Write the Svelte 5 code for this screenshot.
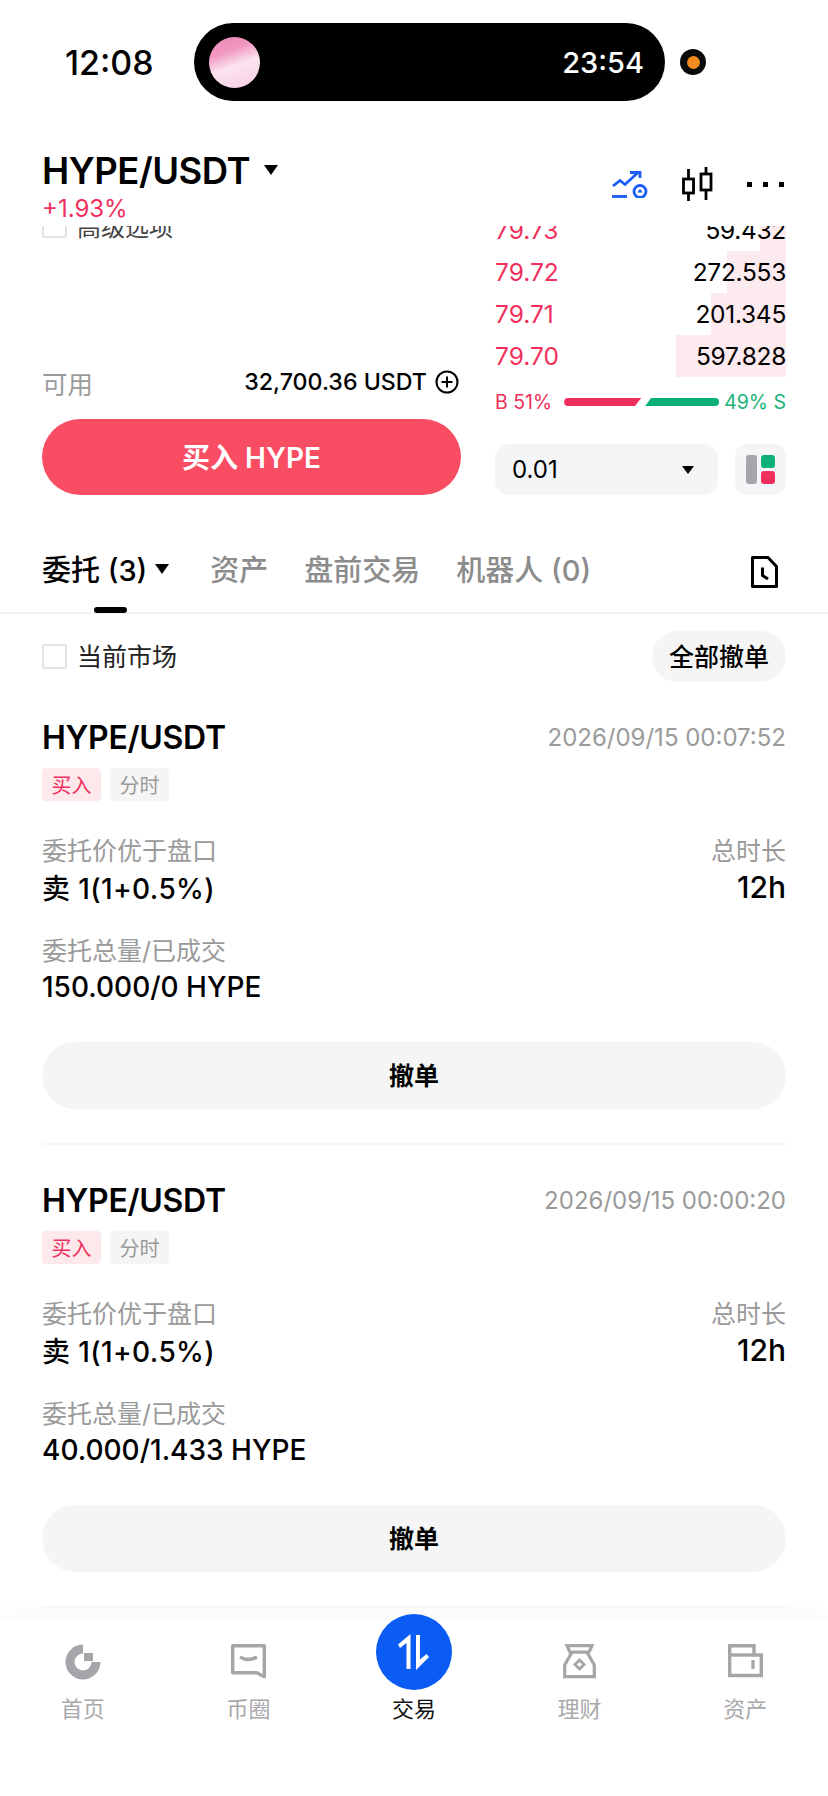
<script>
  const book = [
    { price: '79.73', qty: '59.432', depth: 26 },
    { price: '79.72', qty: '272.553', depth: 59 },
    { price: '79.71', qty: '201.345', depth: 75 },
    { price: '79.70', qty: '597.828', depth: 110 }
  ]

  const tabs = ['资产', '盘前交易', '机器人 (0)']

  const orders = [
    { time: '2026/09/15 00:07:52', amount: '150.000/0 HYPE' },
    { time: '2026/09/15 00:00:20', amount: '40.000/1.433 HYPE' }
  ]
</script>

<div class="page">
  <div class="status">
    <span class="clock">12:08</span>
    <div class="island">
      <div class="avatar"></div>
      <span class="island-time">23:54</span>
    </div>
    <div class="camera"><i></i></div>
  </div>

  <header class="pair">
    <div>
      <div class="pair-name">
        <h1>HYPE/USDT</h1>
        <span class="caret big"></span>
      </div>
      <div class="change">+1.93%</div>
    </div>
    <div class="pair-icons">
      <svg width="36" height="27" viewBox="0 0 36 27" fill="none" stroke="#1a5cf5" stroke-width="2.800">
        <path d="M1 15l7-5.500 5 4L26 1.500" />
        <path d="M18 1.500h10V7" />
        <path d="M0 25.500h15" />
        <circle cx="28" cy="20.500" r="6" />
        <path d="M28 17.800l2.800 3.700h-5.600z" fill="#1a5cf5" stroke="none" />
      </svg>
      <svg width="31" height="35" viewBox="0 0 31 35" fill="none" stroke="#000" stroke-width="2.800">
        <rect x="1.500" y="12" width="10" height="14" />
        <path d="M6.500 2v10M6.500 26v8" />
        <rect x="19" y="7" width="10" height="16" />
        <path d="M24 0v7M24 23v10" />
      </svg>
      <div class="dots"><i></i><i></i><i></i></div>
    </div>
  </header>

  <section class="trade">
    <div class="form">
      <div class="advanced">
        <span class="check"></span>
        <span>高级选项</span>
      </div>
      <div class="avail">
        <span class="grey">可用</span>
        <span class="avail-val">32,700.36 USDT
          <svg width="24" height="24" viewBox="0 0 24 24" fill="none" stroke="#000" stroke-width="2">
            <circle cx="12" cy="12" r="10.500" />
            <path d="M12 6.500v11M6.500 12h11" />
          </svg>
        </span>
      </div>
      <button class="buy">买入 HYPE</button>
    </div>

    <div class="book">
      <div class="rows">
        {#each book as row}
          <div class="row">
            <div class="depth" style="width: {row.depth}px"></div>
            <span class="price">{row.price}</span>
            <span class="qty">{row.qty}</span>
          </div>
        {/each}
      </div>
      <div class="ratio">
        <span class="red">B 51%</span>
        <div class="bar buy-bar"></div>
        <div class="bar sell-bar"></div>
        <span class="green">49% S</span>
      </div>
      <div class="book-tools">
        <div class="step">
          <span>0.01</span>
          <span class="caret small"></span>
        </div>
        <div class="layout-btn">
          <i class="lg"></i>
          <i class="lt"></i>
          <i class="lb"></i>
        </div>
      </div>
    </div>
  </section>

  <nav class="tabs">
    <div class="tab active">
      委托 (3)
      <span class="caret mid"></span>
      <span class="underline"></span>
    </div>
    {#each tabs as t}
      <div class="tab">{t}</div>
    {/each}
    <svg class="doc" width="27" height="32" viewBox="0 0 27 32" fill="none" stroke="#000" stroke-width="3">
      <path d="M1.500 1.500H17l8.500 9v20H1.500z" stroke-linejoin="round" />
      <path d="M11.500 11.500v8L17 23" />
    </svg>
  </nav>

  <div class="filter">
    <div class="filter-left">
      <span class="check"></span>
      <span>当前市场</span>
    </div>
    <button class="cancel-all">全部撤单</button>
  </div>

  {#each orders as o}
    <article class="order">
      <div class="order-top">
        <h2>HYPE/USDT</h2>
        <span class="time">{o.time}</span>
      </div>
      <div class="tags">
        <span class="tag tag-buy">买入</span>
        <span class="tag">分时</span>
      </div>
      <div class="kv first">
        <span class="grey">委托价优于盘口</span>
        <span class="grey">总时长</span>
      </div>
      <div class="kv val">
        <span class="rule">卖 1(1+0.5%)</span>
        <span class="hours">12h</span>
      </div>
      <div class="kv second">
        <span class="grey">委托总量/已成交</span>
      </div>
      <div class="kv val">
        <span>{o.amount}</span>
      </div>
      <button class="cancel">撤单</button>
    </article>
  {/each}

  <footer class="nav">
    <div class="nav-item">
      <svg width="36" height="36" viewBox="0 0 36 36" fill="#a5a6a9">
        <path d="M18 .5A17.500 17.500 0 1 0 35.500 18h-9A8.500 8.500 0 1 1 18 9.500z" />
        <rect x="19" y="9" width="9" height="8" />
      </svg>
      <span>首页</span>
    </div>
    <div class="nav-item">
      <svg width="35" height="36" viewBox="0 0 35 36" fill="none" stroke="#a5a6a9" stroke-width="3.400">
        <path d="M1.700 1.700h31.600v31l-7.500-4H1.700z" stroke-linejoin="round" />
        <path d="M9 13q8.500 5 17 0" />
      </svg>
      <span>币圈</span>
    </div>
    <div class="nav-item current">
      <div class="fab">
        <svg width="31" height="36" viewBox="0 0 31 36" fill="#fff">
          <path d="M12.500 0v35h-4V9L2 14 0 10.500z" />
          <path d="M18 36V1h4v24.500l6.500-5.500 2.500 3z" />
        </svg>
      </div>
      <span>交易</span>
    </div>
    <div class="nav-item">
      <svg width="33" height="36" viewBox="0 0 33 36" fill="none" stroke="#a5a6a9" stroke-width="3.200">
        <path d="M4 1.700h25l-3 6.500H7z" />
        <path d="M9 8.200L1.700 21v11.700h29.600V21L24 8.200" />
        <path d="M16.500 16l4.500 4.500-4.500 4.500-4.500-4.500z" stroke-width="2.800" />
      </svg>
      <span>理财</span>
    </div>
    <div class="nav-item">
      <svg width="35" height="36" viewBox="0 0 35 36" fill="none" stroke="#a5a6a9" stroke-width="3.400">
        <path d="M1.700 1.700H26V11h7.300v20.500H1.700z" />
        <path d="M1.700 11H26" />
        <path d="M25 16v9" />
      </svg>
      <span>资产</span>
    </div>
  </footer>
</div>

<style>
  :global(body) {
    margin: 0;
    background: #fff;
  }

  .page {
    position: relative;
    width: 828px;
    height: 1796px;
    overflow: hidden;
    background: #fff;
    color: #000;
    font-family: Inter, 'Noto Sans CJK SC', sans-serif;
  }

  h1, h2 {
    margin: 0;
    font-weight: 600;
  }

  button {
    border: 0;
    font-family: inherit;
    padding: 0;
  }

  .grey { color: #9a9a9a; }
  .red { color: #f0305c; }
  .green { color: #1cb27b; }

  .status {
    display: flex;
    align-items: center;
    height: 78px;
    padding: 23px 0 0 65px;
  }

  .clock {
    width: 129px;
    font-size: 34px;
    font-weight: 500;
  }

  .island {
    display: flex;
    align-items: center;
    justify-content: space-between;
    width: 471px;
    height: 78px;
    padding: 0 21px 0 15px;
    box-sizing: border-box;
    border-radius: 39px;
    background: #000;
    color: #fff;
    font-size: 29px;
    font-weight: 500;
  }

  .avatar {
    width: 51px;
    height: 51px;
    border-radius: 50%;
    background: linear-gradient(160deg, #ee85b4 0%, #f198c2 30%, #fbe3ee 55%, #f9cfe2 100%);
  }

  .camera {
    display: flex;
    align-items: center;
    justify-content: center;
    width: 26px;
    height: 26px;
    margin-left: 15px;
    border-radius: 50%;
    background: #0a0a0a;
  }

  .camera i {
    width: 13px;
    height: 13px;
    border-radius: 50%;
    background: #f28a20;
  }

  .pair {
    display: flex;
    justify-content: space-between;
    height: 125px;
    padding: 0 42px 2px;
    box-sizing: border-box;
    align-items: flex-end;
  }

  .pair-name {
    display: flex;
    align-items: center;
    gap: 14px;
    height: 46px;
  }

  h1 {
    font-size: 36.500px;
    letter-spacing: -0.5px;
  }

  .change {
    font-size: 24px;
    line-height: 30px;
    color: #f0305c;
  }

  .pair-icons {
    display: flex;
    align-items: center;
    gap: 34px;
    margin: 0 2px 22px 0;
  }

  .dots {
    display: flex;
    gap: 11px;
  }

  .dots i {
    width: 5px;
    height: 5px;
    background: #000;
  }

  .caret {
    display: inline-block;
    border-style: solid;
    border-color: #000 transparent transparent;
  }

  .caret.big { border-width: 10px 7px 0; margin-bottom: 3px; }
  .caret.mid { border-width: 10px 7px 0; margin: 2px 6px 0 8px; }
  .caret.small { border-width: 8px 6px 0; }

  .trade {
    display: flex;
    justify-content: space-between;
    height: 270px;
    padding: 0 42px;
    overflow: hidden;
  }

  .form {
    display: flex;
    flex-direction: column;
    width: 419px;
    height: 270px;
  }

  .advanced {
    display: flex;
    align-items: center;
    gap: 10px;
    height: 26px;
    margin-top: -14px;
    font-size: 24px;
    color: #444;
  }

  .check {
    width: 21px;
    height: 21px;
    border: 2px solid #e2e2e2;
    border-radius: 3px;
    background: #fff;
  }

  .avail {
    display: flex;
    align-items: center;
    justify-content: space-between;
    height: 32px;
    margin-top: 128px;
    font-size: 25.500px;
  }

  .avail-val {
    display: flex;
    align-items: center;
    gap: 8px;
    padding-right: 2px;
    font-size: 23.200px;
    font-weight: 500;
  }

  .buy {
    height: 76px;
    margin-top: 21px;
    padding-bottom: 3px;
    border-radius: 38px;
    background: #f94d63;
    color: #fff;
    font-size: 28px;
    font-weight: 600;
  }

  .book {
    width: 291px;
  }

  .rows {
    margin-top: -17px;
  }

  .row {
    position: relative;
    display: flex;
    justify-content: space-between;
    align-items: center;
    height: 42px;
    font-size: 24.500px;
  }

  .depth {
    position: absolute;
    top: 0;
    right: 0;
    bottom: 0;
    background: #fdeaee;
  }

  .price {
    position: relative;
    color: #f0305c;
  }

  .qty {
    position: relative;
    letter-spacing: -0.3px;
  }

  .ratio {
    display: flex;
    align-items: center;
    height: 50px;
    font-size: 19.500px;
  }

  .ratio .green {
    margin-left: auto;
  }

  .bar {
    height: 8px;
  }

  .buy-bar {
    width: 77px;
    margin-left: 12px;
    border-radius: 4px 0 0 4px;
    background: #f0305c;
    clip-path: polygon(0 0, 100% 0, 92% 100%, 0 100%);
  }

  .sell-bar {
    width: 74px;
    margin-left: 4px;
    border-radius: 0 4px 4px 0;
    background: #0bb078;
    clip-path: polygon(8% 0, 100% 0, 100% 100%, 0 100%);
  }

  .book-tools {
    display: flex;
    justify-content: space-between;
    margin-top: 17px;
  }

  .step {
    display: flex;
    align-items: center;
    justify-content: space-between;
    width: 223px;
    height: 51px;
    padding: 0 24px 0 17px;
    box-sizing: border-box;
    border-radius: 14px;
    background: #f4f5f7;
    font-size: 24px;
  }

  .layout-btn {
    display: grid;
    grid-template-columns: 11px 14px;
    grid-template-rows: 13px 13px;
    gap: 3px 4px;
    align-content: center;
    justify-content: center;
    width: 51px;
    height: 51px;
    border-radius: 12px;
    background: #f4f5f7;
  }

  .layout-btn i { border-radius: 3px; }
  .lg { grid-row: 1 / 3; background: #a5a6a9; }
  .lt { background: #0bb078; }
  .lb { background: #f0305c; }

  .tabs {
    position: relative;
    display: flex;
    align-items: center;
    gap: 36px;
    height: 118px;
    padding: 28px 42px 0;
    box-sizing: border-box;
    border-bottom: 2px solid #f3f3f3;
  }

  .tab {
    display: flex;
    align-items: center;
    font-size: 29px;
    font-weight: 500;
    color: #8c8c8c;
  }

  .tab.active {
    color: #000;
    margin-right: -1px;
  }

  .underline {
    position: absolute;
    left: 94px;
    bottom: -1px;
    width: 33px;
    height: 6px;
    border-radius: 3px;
    background: #000;
  }

  .doc {
    position: absolute;
    right: 50px;
    top: 60px;
  }

  .filter {
    display: flex;
    align-items: center;
    justify-content: space-between;
    padding: 17px 42px 0;
  }

  .filter-left {
    display: flex;
    align-items: center;
    gap: 10px;
    font-size: 25px;
    color: #222;
  }

  .filter-left span:last-child {
    margin-bottom: 3px;
  }

  .cancel-all {
    width: 134px;
    height: 51px;
    padding-bottom: 4px;
    border-radius: 26px;
    background: #f5f5f5;
    color: #000;
    font-size: 25px;
    font-weight: 500;
  }

  .order {
    margin: 0 42px;
    padding-top: 36px;
    height: 463px;
    box-sizing: border-box;
    border-bottom: 2px solid #f7f7f7;
  }

  .order-top {
    display: flex;
    align-items: center;
    justify-content: space-between;
    height: 38px;
  }

  h2 {
    font-size: 32px;
    letter-spacing: -0.3px;
  }

  .time {
    font-size: 24px;
    color: #9a9a9a;
  }

  .tags {
    display: flex;
    gap: 9px;
    margin-top: 12px;
  }

  .tag {
    display: flex;
    align-items: center;
    justify-content: center;
    width: 59px;
    height: 33px;
    border-radius: 4px;
    background: #f5f5f5;
    color: #999;
    font-size: 20px;
  }

  .tag-buy {
    background: #fde8ec;
    color: #f0305c;
  }

  .kv {
    display: flex;
    justify-content: space-between;
    align-items: center;
    font-size: 25px;
    height: 36px;
  }

  .kv.first { margin-top: 30px; }
  .kv.second { margin-top: 26px; }

  .kv.val {
    margin-top: 2px;
    font-size: 28px;
    font-weight: 500;
  }

  .rule {
    letter-spacing: 0.4px;
  }

  .hours {
    font-size: 30px;
  }

  .cancel {
    display: block;
    width: 100%;
    height: 67px;
    margin-top: 37px;
    padding-bottom: 4px;
    border-radius: 34px;
    background: #f5f5f5;
    color: #000;
    font-size: 25px;
    font-weight: 600;
  }

  .nav {
    position: absolute;
    left: 0;
    right: 0;
    bottom: 0;
    display: flex;
    height: 176px;
    padding-top: 24px;
    box-sizing: border-box;
    background: #fff;
    box-shadow: 0 -10px 12px rgba(0, 0, 0, 0.02);
  }

  .nav-item {
    display: flex;
    flex-direction: column;
    align-items: center;
    flex: 1;
    gap: 15px;
    font-size: 22px;
    line-height: 28px;
    color: #a8a9ac;
  }

  .nav-item.current {
    color: #111;
  }

  .fab {
    display: flex;
    align-items: center;
    justify-content: center;
    width: 76px;
    height: 76px;
    margin: -30px 0 -10px;
    border-radius: 50%;
    background: #0b5cf5;
  }
</style>
